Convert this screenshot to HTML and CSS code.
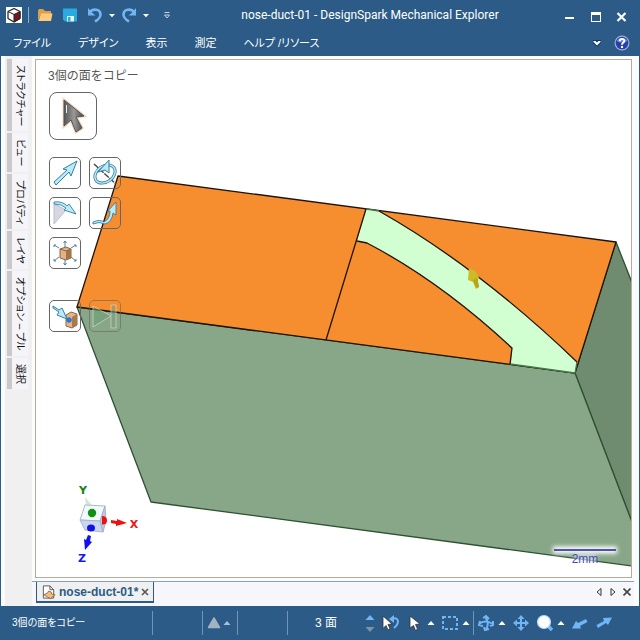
FILE: index.html
```html
<!DOCTYPE html>
<html lang="ja">
<head>
<meta charset="utf-8">
<title>nose-duct-01 - DesignSpark Mechanical Explorer</title>
<link rel="stylesheet" href="styles.css">
</head>
<body>
<div class="app">
  <header class="header">
    <div class="titlebar">
      <div class="quick">
        <svg class="logo" viewBox="0 0 16 16" aria-hidden="true"><path fill="#fff" d="M0 0h16v16H0z"/><path fill="#fff" stroke="#222" stroke-width="1.2" stroke-linejoin="round" d="M8 1.500l6 3v7l-6 3.500-6-3.500v-7z"/><path fill="#7c1420" stroke="#222" d="M8 7.500l6-3v7l-6 3.500z"/><path fill="none" stroke="#222" d="M2 4.500l6 3"/></svg>
        <span class="rule"></span>
        <button class="icon-btn folder" aria-label="開く"><svg viewBox="0 0 16 16"><path fill="#dd9f4b" d="M1 14V3.500L2 2h4l2 2h6v3H4z"/><path fill="#ffca7b" d="M4 6.500h11.500L14 14H1.500z"/></svg></button>
        <button class="icon-btn save" aria-label="保存"><svg viewBox="0 0 16 16"><path fill="#29abe2" d="M1 1.500h14v13H3l-2-2z"/><path fill="#e8f6fc" d="M5 9h7v5.500H5z"/><path fill="#29abe2" d="M6 10h2.500v4.500H6z"/></svg></button>
        <button class="icon-btn" aria-label="元に戻す"><svg viewBox="0 0 16 16"><path fill="none" stroke="#72b5f5" stroke-width="2.600" d="M2.500 5.500C6 1 13 2 13.500 7c.3 3-2 5.500-5.500 7.500"/><path fill="#72b5f5" d="M1 1v7.500h7.500L5.500 6z"/></svg></button>
        <button class="caret-btn" aria-label="元に戻す一覧"><svg viewBox="0 0 8 8"><path fill="#fff" d="M1 3h6L4 6.200z"/></svg></button>
        <button class="icon-btn" aria-label="やり直し"><svg viewBox="0 0 16 16"><path fill="none" stroke="#72b5f5" stroke-width="2.600" d="M13.500 5.500C10 1 3 2 2.500 7c-.3 3 2 5.500 5.500 7.500"/><path fill="#72b5f5" d="M15 1v7.500H7.500L10.500 6z"/></svg></button>
        <button class="caret-btn" aria-label="やり直し一覧"><svg viewBox="0 0 8 8"><path fill="#fff" d="M1 3h6L4 6.200z"/></svg></button>
        <button class="caret-btn custom" aria-label="クイックアクセスの設定"><svg viewBox="0 0 8 8"><path fill="none" stroke="#d5e0ea" stroke-width=".9" d="M1.500 1.500h5M1.500 4h5L4 7z"/></svg></button>
      </div>
      <h1 class="title">nose-duct-01 - DesignSpark Mechanical Explorer</h1>
      <div class="window-controls">
        <button class="icon-btn" aria-label="最小化"><svg viewBox="0 0 16 16"><path fill="#fff" d="M3 10h9v2H3z"/></svg></button>
        <button class="icon-btn" aria-label="最大化"><svg viewBox="0 0 16 16"><path fill="#fff" fill-rule="evenodd" d="M3 5h10v10H3zM4 8v6h8V8z"/></svg></button>
        <button class="icon-btn" aria-label="閉じる"><svg viewBox="0 0 16 16"><path stroke="#fff" stroke-width="2.200" d="M3.500 6l8 8M11.500 6l-8 8"/></svg></button>
      </div>
    </div>
    <div class="menubar">
      <nav class="menu">
        <button>ファイル</button><button>デザイン</button><button>表示</button><button>測定</button><button>ヘルプ /リソース</button>
      </nav>
      <div class="menu-end">
        <button class="caret-btn" aria-label="リボンの展開"><svg viewBox="0 0 8 8"><path fill="#173a5c" d="M0 1h8v3L4 8 0 4z"/><path fill="#fff" d="M.5 2h2L4 3.500 5.500 2h2v1L4 6.500.5 3z"/></svg></button>
        <button class="icon-btn" aria-label="ヘルプ"><svg viewBox="0 0 16 16"><circle cx="8" cy="8" r="7.500" fill="#a3b0d4"/><circle cx="8" cy="8" r="6.300" fill="#263fae"/><path fill="#6f86dc" d="M2.500 6a6 5 0 0 1 11 0Q8 9 2.500 6z"/><path fill="none" stroke="#fff" stroke-width="1.900" d="M5.700 6.300c0-3 4.700-3 4.700-.3C10.400 7.700 8 7.500 8 9.800"/><circle cx="8" cy="11.900" r="1.200" fill="#fff"/></svg></button>
      </div>
    </div>
  </header>

  <div class="workspace">
    <aside class="side">
      <button>ストラクチャー</button>
      <button>ビュー</button>
      <button>プロパティ</button>
      <button>レイヤ</button>
      <button>オプション – プル</button>
      <button>選択</button>
    </aside>
    <div class="document">
      <main class="viewport">
        <svg class="scene" viewBox="36 60 595 517" preserveAspectRatio="xMinYMin slice" role="img" aria-label="nose-duct-01">
          <defs>
            <filter id="glow" filterUnits="userSpaceOnUse" x="535" y="535" width="96" height="42"><feGaussianBlur stdDeviation="2"/></filter>
          </defs>
          <g stroke-linejoin="round" stroke-width="1.300">
            <path fill="#6f8b70" stroke="#2f5133" d="M616 242l24 61v240L575 373z"/>
            <path fill="#88a788" stroke="#2f5133" d="M77 307l74 195 489 65v-24L575 373z"/>
            <path fill="#f68e30" stroke="#1d1208" d="M118 176l498 66-41 131L77 307z"/>
            <path fill="#d2ffd2" d="M366 209l13 2Q478 267 577 362l-2 11-64-9 1-16Q440 281 367 243l-10-2z"/>
            <path fill="none" stroke="#487849" d="M366 209l13 2M577 362l-2 11-65-9"/>
            <path fill="none" stroke="#1d1208" d="M366 209l-40 131M379 211Q478 267 577 362M510 364l2-16Q440 281 367 243l-10-2"/>
          </g>
          <path fill="#cdbb25" d="M469 268l6 3 4 6-1 4 1 6-3 2-3-7-5-2z"/><path fill="#b5a41c" d="M473 280l4-2 2 9-3 1z"/>
          <g>
            <path fill="#d3e9d3" d="M85 497l7 8-6 2z"/>
            <path fill="#f0fafb" stroke="#aebac9" d="M85 505l20 1-5 15-20-1z"/>
            <path fill="#cbd5ee" stroke="#aab6d2" d="M80 520l20 1 3 11-18-2z"/>
            <path fill="#c3c8df" stroke="#a8b0cc" d="M105 506l1 15-3 11-3-11z"/>
            <circle cx="92" cy="513" r="4.200" fill="#119016"/><ellipse cx="91" cy="528" rx="4" ry="3.600" fill="#1010e8"/>
            <path fill="#ec1111" d="M102 516q5 0 5 4.500t-5 4z"/>
            <path fill="#f01010" d="M111 520l6 1v-2l10 4-11 3v-2l-5-1z"/>
            <path fill="#1010f0" d="M88 535l3 1-1 5 2 1-7 8-1-11 2 1z"/>
          </g>
          <g class="axis" text-anchor="middle">
            <text x="83" y="494" fill="#16821a">Y</text><text x="134" y="528" fill="#ee1515">X</text><text x="82" y="562" fill="#1717ee">Z</text>
          </g>
          <g filter="url(#glow)">
            <path stroke="#fff" stroke-width="7" d="M553 550h64"/>
            <path stroke="#fff" stroke-width="9" stroke-opacity=".6" d="M575 560h21"/>
          </g>
          <path stroke="#5050bd" stroke-width="2" d="M554 550h62"/>
          <text class="scale" x="585" y="563" text-anchor="middle">2mm</text>
        </svg>
        <div class="tools">
          <p class="hint">3個の面をコピー</p>
          <button class="tool large" aria-label="選択"><svg viewBox="0 0 46 46"><defs><linearGradient id="steel"><stop stop-color="#555"/><stop offset=".5" stop-color="#999"/><stop offset="1" stop-color="#444"/></linearGradient></defs><path fill="none" stroke="#f0d5bd" stroke-width="3" d="M14 7l20 16-8 1 6 11-6 4-5-12-7 6z"/><path fill="url(#steel)" stroke="#555" d="M14 7l20 16-8 1 6 11-6 4-5-12-7 6z"/><path fill="none" stroke="#eee" d="M16.500 12v8"/></svg></button>
          <div class="tool-grid">
            <button class="tool" aria-label="移動"><svg viewBox="0 0 30 30"><path fill="#b9ebfa" stroke="#367fa0" d="M4 24L17 12l-4-1L27 3l-6 15-2-4L6 27z"/></svg></button>
            <button class="tool" aria-label="回転"><svg viewBox="0 0 30 30"><path stroke="#444" stroke-width="1.400" stroke-dasharray="6 1" d="M4 6l22 20"/><ellipse cx="15" cy="16" rx="11" ry="8" transform="rotate(-35 15 16)" fill="none" stroke="#367fa0" stroke-width="3"/><ellipse cx="15" cy="16" rx="11" ry="8" transform="rotate(-35 15 16)" fill="none" stroke="#b9ebfa" stroke-width="1.400"/><path fill="#b9ebfa" stroke="#367fa0" d="M19 2v13l-4-3-7 2z"/></svg></button>
            <button class="tool" aria-label="方向"><svg viewBox="0 0 30 30"><path fill="#d5d7e3" stroke="#bbbfd1" d="M4 6v20l12-14z"/><path fill="#b9ebfa" stroke="#367fa0" stroke-width=".9" d="M4 4q9-1 13 4l2-2 7 10-12-4 2-2Q12 6 4 6z"/></svg></button>
            <button class="tool" aria-label="軌道"><svg viewBox="0 0 30 30"><path fill="#b9ebfa" stroke="#367fa0" stroke-width=".9" d="M3 24q7-3 11 0 6-3 6-11l-3 1 9-10v13l-3-2q-1 9-8 11-6-3-12 0z"/></svg></button>
            <button class="tool" aria-label="支点"><svg viewBox="0 0 30 30"><path fill="none" stroke="#54849e" d="M15 9V3m-1.500 2L15 3l1.500 2M15 21v6m-1.500-2l1.500 2 1.500-2M9 10L4 7m0 2V7h2M21 10l5-3m-2 0h2v2M9 19l-5 4m0-2v2h2M21 19l5 4m-2 0h2v-2"/><path fill="#e0b28a" stroke="#8d6544" d="M10 11l6-2 5 2v9l-5 2-6-2z"/><path fill="#a6744b" d="M16 13l5-2v9l-5 2z"/><path fill="none" stroke="#8d6544" d="M10 11l6 2 5-2"/></svg></button>
          </div>
          <div class="tool-grid">
            <button class="tool" aria-label="アップ トゥ"><svg viewBox="0 0 30 30"><path fill="#e3b58b" stroke="#93673f" d="M16 14l5-3 6 2v11l-5 3-6-2z"/><path fill="#ad7750" d="M22 16l5-3v11l-5 3z"/><path fill="#b9ebfa" stroke="#367fa0" d="M3 5l6 4 3-2 5 11-10-4 2-3-6-4z"/><path stroke="#2d75cf" stroke-width="1.300" d="M19 16v6M16 19h6M17 17l4 4M21 17l-4 4"/></svg></button>
            <button class="tool" aria-label="完了" disabled><svg viewBox="0 0 30 30"><path fill="#6f9f73" stroke="#d5e2d5" d="M3 5l18 10L3 26z"/><path fill="#7f9f80" stroke="#d5e2d5" d="M21 4h5v23h-5z"/></svg></button>
          </div>
        </div>
      </main>
      <div class="doc-tabs">
        <div class="doc-tab">
          <svg viewBox="0 0 16 16" aria-hidden="true"><path fill="#fff" stroke="#555" d="M2.500 1.500h7l4 4v9h-11z"/><path fill="none" stroke="#555" d="M9.500 1.500v4h4"/><path fill="#f4bd80" stroke="#81512d" stroke-width=".8" d="M3 11l4-2 1-2 3 1v2l4 1-5 4z"/></svg>
          <a href="#">nose-duct-01*</a>
          <button aria-label="タブを閉じる"><svg viewBox="0 0 8 8"><path stroke="#555" stroke-width="1.600" d="M1 1l6 6M7 1L1 7"/></svg></button>
        </div>
        <div class="tab-nav">
          <button aria-label="前のタブ"><svg viewBox="0 0 8 8"><path fill="none" stroke="#333" d="M6 .5v7L2 4z"/></svg></button>
          <button aria-label="次のタブ"><svg viewBox="0 0 8 8"><path fill="none" stroke="#333" d="M2 .5v7L6 4z"/></svg></button>
          <button aria-label="閉じる"><svg viewBox="0 0 8 8"><path stroke="#444" stroke-width="1.600" d="M.5.500l7 7M7.500.500l-7 7"/></svg></button>
        </div>
      </div>
    </div>
  </div>

  <footer class="status">
    <div class="cell message">3個の面をコピー</div>
    <div class="cell"></div>
    <div class="cell warn">
      <button class="view-btn" aria-label="警告"><svg viewBox="0 0 18 18"><path fill="#a3b3c2" stroke="#a3b3c2" stroke-width="1.500" stroke-linejoin="round" d="M9 4l5.500 9.500h-11z"/></svg></button>
      <button class="caret-btn" aria-label="警告一覧"><svg viewBox="0 0 8 8"><path fill="#a6c0d8" d="M.5 6L4 2l3.500 4z"/></svg></button>
    </div>
    <div class="cell"></div>
    <div class="count">3 面</div>
    <div class="view-tools">
      <button class="spin" aria-label="選択の切替"><svg viewBox="0 0 12 18"><path fill="#72b5f5" d="M1.500 6L6 1l4.500 5z"/><path fill="#7c93a9" d="M1.500 13L6 18l4.500-5z"/></svg></button>
      <button class="view-btn" aria-label="選択を戻す"><svg viewBox="0 0 18 18"><path fill="none" stroke="#72b5f5" stroke-width="2" d="M10 5q5-2 6 2 0 4-4 7"/><path fill="#72b5f5" d="M7 5l5-4v8z"/><path fill="#fff" stroke="#333" stroke-width=".8" d="M1 2l9 8-4 .5 2 4-2 1.500-2-4.500-3 3z"/></svg></button>
      <div class="pair">
        <button class="view-btn" aria-label="選択モード"><svg viewBox="0 0 18 18"><path fill="#fff" stroke="#333" stroke-width=".8" d="M4 2l10 8-4.500.5 2 4.500-2 1.500-2-5L4 14z"/></svg></button>
        <button class="caret-btn" aria-label="選択モード一覧"><svg viewBox="0 0 8 8"><path fill="#fff" d="M.5 6L4 2l3.500 4z"/></svg></button>
      </div>
      <div class="pair">
        <button class="view-btn" aria-label="範囲選択"><svg viewBox="0 0 18 18"><path fill="none" stroke="#72b5f5" stroke-width="2" stroke-dasharray="3 2" d="M2 3h14v12H2z"/></svg></button>
        <button class="caret-btn" aria-label="範囲選択一覧"><svg viewBox="0 0 8 8"><path fill="#fff" d="M.5 6L4 2l3.500 4z"/></svg></button>
      </div>
      <span class="rule tall"></span>
      <div class="pair">
        <button class="view-btn" aria-label="ビューの回転"><svg viewBox="0 0 18 18"><path fill="none" stroke="#72b5f5" stroke-width="2" d="M2 10q6-5 14 0M8 3q5 5 1 13M3 7l-1 4 4 1M13 12l3-1V7M6 4l3-2 3 3M7 13l1 3 4-1"/></svg></button>
        <button class="caret-btn" aria-label="ビューの回転一覧"><svg viewBox="0 0 8 8"><path fill="#fff" d="M.5 6L4 2l3.500 4z"/></svg></button>
      </div>
      <button class="view-btn" aria-label="パン"><svg viewBox="0 0 18 18"><path fill="none" stroke="#72b5f5" stroke-width="2" d="M9 2v14M2 9h14"/><path fill="#72b5f5" d="M9 1l3.500 4h-7zM9 17l3.500-4h-7zM1 9l4-3.500v7zM17 9l-4-3.500v7z"/></svg></button>
      <div class="pair">
        <button class="view-btn" aria-label="ズーム"><svg viewBox="0 0 18 18"><path stroke="#72b5f5" stroke-width="3.500" d="M11 11l5 5"/><circle cx="8" cy="8" r="6.500" fill="#fff" stroke="#b1d7fb" stroke-width="1.200"/></svg></button>
        <button class="caret-btn" aria-label="ズーム一覧"><svg viewBox="0 0 8 8"><path fill="#fff" d="M.5 6L4 2l3.500 4z"/></svg></button>
      </div>
      <button class="view-btn" aria-label="前のビュー"><svg viewBox="0 0 18 18"><path fill="#72b5f5" d="M1 14.500L5 7l2 2 8-4 1.500 3L9 12l1 2.500z"/></svg></button>
      <button class="view-btn" aria-label="次のビュー"><svg viewBox="0 0 18 18"><path fill="#72b5f5" d="M17 3.500L13 11l-2-2-8 5-1.500-3L9 7 8 4z"/></svg></button>
    </div>
  </footer>
</div>
</body>
</html>
```

FILE: styles.css
```css
* { box-sizing: border-box; }

body {
  margin: 0;
  font-family: "Liberation Sans", "Noto Sans CJK JP", sans-serif;
  font-size: 12px;
  color: #111;
}

button {
  margin: 0;
  padding: 0;
  border: 0;
  background: none;
  color: inherit;
  font: inherit;
}

svg { display: block; }

.app {
  display: flex;
  flex-direction: column;
  min-height: 100vh;
  background: #2b5b86;
}

.header { color: #fff; }

.titlebar {
  display: grid;
  grid-template-columns: 180px 1fr 80px;
  align-items: center;
  height: 30px;
}

.quick {
  display: flex;
  align-items: center;
  gap: 5px;
  padding-left: 6px;
}

.logo { width: 16px; height: 16px; }
.rule { width: 1px; height: 16px; background: #8facc6; }
.quick .rule { margin: 0 3px 0 1px; }
.icon-btn { width: 16px; height: 16px; flex: none; }
.caret-btn { width: 8px; height: 8px; flex: none; }
.folder, .save { margin-right: 4px; }
.custom { margin-left: 8px; }

.title {
  margin: 0;
  font: 12px/18px Roboto, sans-serif;
  text-align: center;
  white-space: nowrap;
}

.window-controls {
  display: flex;
  align-items: center;
  gap: 10px;
  padding-left: 2px;
}

.menubar {
  display: flex;
  justify-content: space-between;
  align-items: center;
  height: 26px;
  padding: 0 10px 0 13px;
}

.menu {
  display: flex;
  gap: 27px;
  font-size: 11px;
  line-height: 16px;
  font-feature-settings: "palt";
}

.menu-end { display: flex; align-items: center; gap: 13px; }

.workspace {
  display: flex;
  flex: 1;
  margin: 0 1px;
  background: #fbfcff;
}

.side {
  display: flex;
  flex-direction: column;
  align-items: flex-start;
  gap: 2px;
  width: 31px;
  padding: 3px 0 0 2px;
  border-left: 4px solid #fbfcff;
  background: #f0f0f0;
}

.side button {
  writing-mode: vertical-rl;
  text-orientation: sideways;
  padding: 6px 0 5px;
  border-left: 5px solid #c9c9c9;
  background: #f5f5f9;
  font-size: 10px;
  line-height: 16px;
  font-feature-settings: "palt";
  white-space: nowrap;
}

.document {
  display: flex;
  flex: 1;
  flex-direction: column;
  min-width: 0;
  padding-right: 5px;
}

.viewport {
  position: relative;
  flex: 1;
  margin: 3px 2px 3px 3px;
  overflow: hidden;
  border: 1px solid #b5ad96;
  background: #fff;
}

.scene {
  position: absolute;
  inset: 0;
  width: 100%;
  height: 100%;
}

.axis { font: bold 11px "DejaVu Sans", sans-serif; }
.scale { font: 12px "Liberation Sans", sans-serif; fill: #4848c4; }

.tools {
  position: relative;
  display: flex;
  flex-direction: column;
  align-items: flex-start;
  padding: 8px 0 8px 12px;
}

.hint {
  margin: 0 0 8px;
  font-size: 12px;
  line-height: 16px;
  color: #555;
}

.tool {
  width: 32px;
  height: 32px;
  border: 1px solid #666;
  border-radius: 5px;
}

.tool svg { width: 100%; height: 100%; }
.tool:disabled { opacity: .6; }

.large {
  width: 48px;
  height: 48px;
  margin: 0 0 17px 1px;
  border-radius: 8px;
}

.tool-grid {
  display: grid;
  grid-template-columns: 32px 32px;
  gap: 8px;
  margin: 0 0 31px 1px;
}

.doc-tabs {
  display: flex;
  justify-content: space-between;
  height: 25px;
  border-top: 1px solid #8ba0b3;
  background: #f7f7fb;
}

.doc-tab {
  display: flex;
  align-items: center;
  gap: 3px;
  height: 21px;
  margin-left: 4px;
  padding: 0 4px;
  border: 1px solid #2b5b86;
  border-top: 0;
  border-bottom-width: 2px;
  background: #f0f0f0;
}

.doc-tab > svg { width: 15px; height: 16px; }
.doc-tab a { color: #2b5b86; font-size: 12px; font-weight: bold; text-decoration: none; }
.doc-tab button, .tab-nav button { width: 8px; height: 8px; }

.tab-nav {
  display: flex;
  gap: 6px;
  padding: 6px 3px;
}

.status {
  display: grid;
  grid-template-columns: 153px 50px 35px 50px 1fr auto;
  align-items: center;
  height: 34px;
  color: #fff;
  line-height: 16px;
}

.cell {
  display: flex;
  align-items: center;
  height: 24px;
  border-right: 1px solid #6f95b8;
}

.message {
  padding-left: 12px;
  font-size: 10px;
  font-feature-settings: "palt";
}

.warn { padding-left: 2px; }
.view-btn { width: 18px; height: 18px; flex: none; }
.spin { width: 12px; height: 18px; flex: none; }
.count { text-align: center; }

.view-tools {
  display: flex;
  align-items: center;
  gap: 6px;
  padding-right: 27px;
}

.pair { display: flex; align-items: center; gap: 3px; }
.tall { height: 24px; margin: 0 -3px; background: #6f95b8; }
```
